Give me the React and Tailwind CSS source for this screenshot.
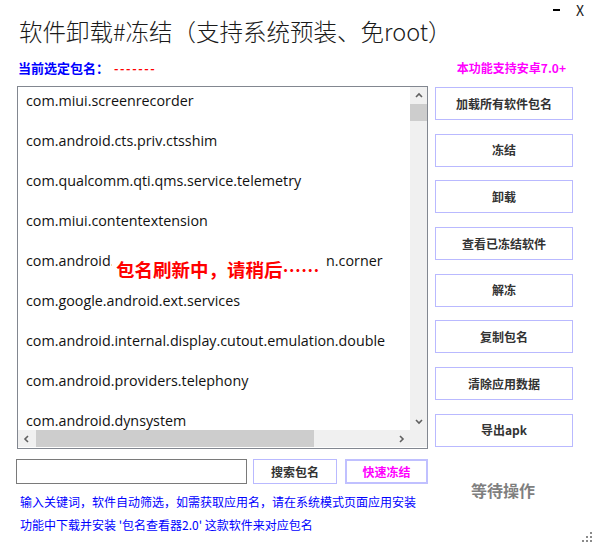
const packages = [
  "com.miui.screenrecorder",
  "com.android.cts.priv.ctsshim",
  "com.qualcomm.qti.qms.service.telemetry",
  "com.miui.contentextension",
  "com.android.internal.display.cutout.emulation.corner",
  "com.google.android.ext.services",
  "com.android.internal.display.cutout.emulation.double",
  "com.android.providers.telephony",
  "com.android.dynsystem",
];

const actions = [
  "加载所有软件包名",
  "冻结",
  "卸载",
  "查看已冻结软件",
  "解冻",
  "复制包名",
  "清除应用数据",
  "导出apk",
];

const cjk = { fontFamily: '"Noto Sans CJK SC", "Noto Sans", sans-serif' };
const latin = { fontFamily: '"Open Sans", "Noto Sans CJK SC", sans-serif' };

const Chevron = ({ dir }) => {
  const paths = {
    up: "M1 5 L4 2 L7 5",
    down: "M1 2 L4 5 L7 2",
    left: "M5 1 L2 4 L5 7",
    right: "M2 1 L5 4 L2 7",
  };
  return (
    <svg width="8" height="8" viewBox="0 0 8 8">
      <path d={paths[dir]} fill="none" stroke="#606060" strokeWidth="1.6" />
    </svg>
  );
};

const App = () => {
  return (
    <div className="relative w-[592px] h-[544px] bg-white overflow-hidden text-[#1a1a1a]" style={cjk}>
      {/* window controls */}
      <div className="absolute top-0 right-[8px] flex items-start gap-[16px] text-[13px] leading-none">
        <span className="mt-[9px] block w-[7px] h-[2px] bg-black"></span>
        <span className="mt-[3px] text-[14px]">X</span>
      </div>

      <div className="pl-[19px] pt-[15px] text-[23.5px] font-light leading-[32px]">
        软件卸载#冻结（支持系统预装、免root）
      </div>

      <div className="mt-[13px] flex items-center justify-between pl-[18px] pr-[26px] font-bold leading-[16px]">
        <div className="flex items-center">
          <span className="text-[13px] text-[#0000ff]">当前选定包名：</span>
          <span className="ml-[5px] text-[12px] text-[#ff0000] tracking-[1.6px]">-------</span>
        </div>
        <span className="text-[12px] text-[#ff00ff]">本功能支持安卓7.0+</span>
      </div>

      <div className="mt-[10px] flex">
        {/* package list */}
        <div className="ml-[17px] w-[411px] h-[363px] border border-[#828790] flex flex-col">
          <div className="flex h-[343px]">
            <div className="flex-1 overflow-hidden text-[14.3px] text-[#111]" style={latin}>
              {packages.map((p) => (
                <div key={p} className="h-[40px] pt-[4px] pl-[8px] leading-[20px] whitespace-nowrap">
                  {p}
                </div>
              ))}
            </div>
            <div className="w-[17px] bg-[#f0f0f0] flex flex-col items-center">
              <div className="h-[17px] flex items-center justify-center">
                <Chevron dir="up" />
              </div>
              <div className="w-[17px] h-[17px] bg-[#cdcdcd]"></div>
              <div className="flex-1"></div>
              <div className="h-[17px] flex items-center justify-center">
                <Chevron dir="down" />
              </div>
            </div>
          </div>
          <div className="h-[17px] bg-[#f0f0f0] flex items-center">
            <div className="w-[17px] flex justify-center">
              <Chevron dir="left" />
            </div>
            <div className="ml-[1px] w-[278px] h-[17px] bg-[#cdcdcd]"></div>
            <div className="flex-1"></div>
            <div className="w-[17px] mr-[17px] flex justify-center">
              <Chevron dir="right" />
            </div>
          </div>
        </div>

        {/* action buttons */}
        <div className="ml-[7px] mt-[1px] flex flex-col gap-[13.7px]">
          {actions.map((a) => (
            <button
              key={a}
              className="w-[138px] h-[33px] border border-[#b9b9ff] bg-white text-[12px] font-bold text-[#333] leading-none"
              style={cjk}
            >
              {a}
            </button>
          ))}
        </div>
      </div>

      {/* bottom area */}
      <div className="mt-[10px] flex">
        <div className="w-[436px]">
          <div className="flex h-[25px]">
            <input
              type="text"
              className="ml-[16px] w-[231px] h-[25px] border border-[#7a7a7a] outline-none px-1 text-[12px]"
            />
            <button className="ml-[6px] w-[84px] h-[25px] border border-[#b9b9ff] bg-white text-[12px] font-bold text-[#333]" style={cjk}>
              搜索包名
            </button>
            <button className="ml-[8px] w-[83px] h-[25px] border-2 border-[#c0c0ff] bg-white text-[12px] font-bold text-[#ff00ff]" style={cjk}>
              快速冻结
            </button>
          </div>
          <div className="mt-[10px] pl-[20px] text-[12px] leading-[16px] text-[#0000ff]">
            输入关键词，软件自动筛选，如需获取应用名，请在系统模式页面应用安装
          </div>
          <div className="mt-[7px] pl-[20px] text-[12px] leading-[16px] text-[#0000ff]">
            功能中下载并安装 '包名查看器2.0' 这款软件来对应包名
          </div>
        </div>
        <div className="pl-[35px] pt-[19px] text-[16px] font-bold leading-[24px] text-[#7f7f7f]">
          等待操作
        </div>
      </div>

      {/* loading overlay on the list */}
      <div className="absolute left-[112px] top-[252px] h-[34px] pl-[4px] pr-[6px] bg-white text-[18.5px] font-bold leading-[34px] text-[#ff0000]">
        包名刷新中，请稍后……
      </div>

      {/* size grip */}
      <svg className="absolute right-0 bottom-[2px]" width="10" height="10" viewBox="0 0 10 10">
        <rect x="8" y="0" width="2" height="2" fill="#8a8a8a" />
        <rect x="4" y="4" width="2" height="2" fill="#8a8a8a" />
        <rect x="8" y="4" width="2" height="2" fill="#8a8a8a" />
        <rect x="0" y="8" width="2" height="2" fill="#8a8a8a" />
        <rect x="4" y="8" width="2" height="2" fill="#8a8a8a" />
        <rect x="8" y="8" width="2" height="2" fill="#8a8a8a" />
      </svg>
    </div>
  );
};

export default App;
